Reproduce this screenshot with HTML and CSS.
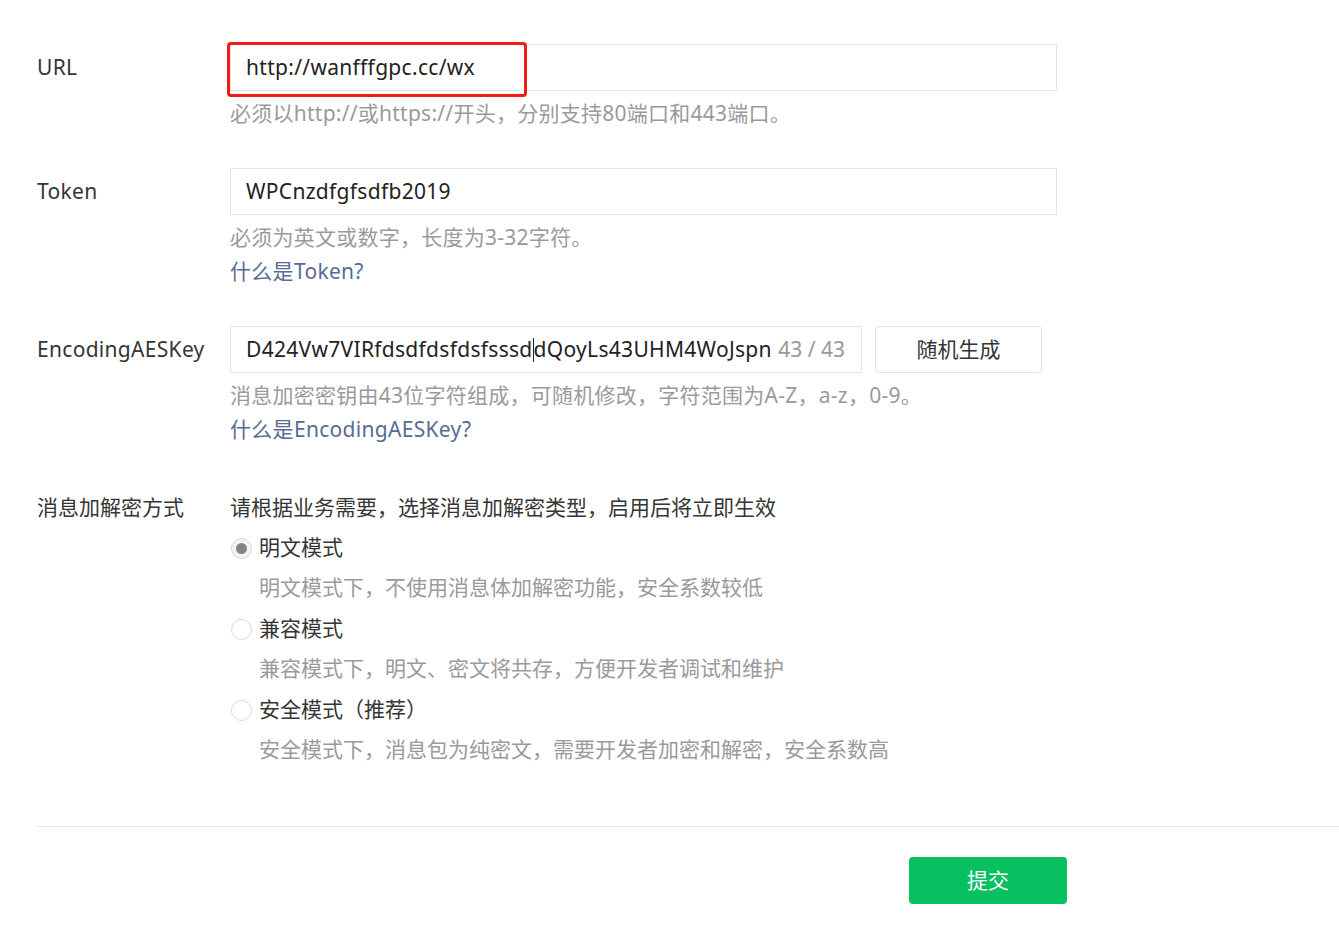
FILE: index.html
```html
<!DOCTYPE html>
<html lang="zh-CN">
<head>
<meta charset="utf-8">
<title>服务器配置</title>
<link rel="stylesheet" href="styles.css">
</head>
<body>
<div class="page">
  <div class="row row-url">
    <div class="label">URL</div>
    <div class="field">
      <div class="input-wrap">
        <div class="input">http://wanfffgpc.cc/wx</div>
        <div class="mark"></div>
      </div>
      <div class="hint">必须以http://或https://开头，分别支持80端口和443端口。</div>
    </div>
  </div>

  <div class="row">
    <div class="label">Token</div>
    <div class="field">
      <div class="input">WPCnzdfgfsdfb2019</div>
      <div class="hint">必须为英文或数字，长度为3-32字符。</div>
      <a class="link" href="#">什么是Token?</a>
    </div>
  </div>

  <div class="row">
    <div class="label">EncodingAESKey</div>
    <div class="field">
      <div class="key-line">
        <div class="input input-key"><span class="key-text">D424Vw7VIRfdsdfdsfdsfsssd<span class="caret"></span>dQoyLs43UHM4WoJspn</span><span class="counter">43 / 43</span></div>
        <button class="btn-gen" type="button">随机生成</button>
      </div>
      <div class="hint">消息加密密钥由43位字符组成，可随机修改，字符范围为A-Z，a-z，0-9。</div>
      <a class="link" href="#">什么是EncodingAESKey?</a>
    </div>
  </div>

  <div class="row row-mode">
    <div class="label label-text">消息加解密方式</div>
    <div class="field">
      <div class="mode-intro">请根据业务需要，选择消息加解密类型，启用后将立即生效</div>
      <div class="option">
        <div class="radio-line"><span class="radio checked"></span><span>明文模式</span></div>
        <div class="option-desc">明文模式下，不使用消息体加解密功能，安全系数较低</div>
      </div>
      <div class="option">
        <div class="radio-line"><span class="radio"></span><span>兼容模式</span></div>
        <div class="option-desc">兼容模式下，明文、密文将共存，方便开发者调试和维护</div>
      </div>
      <div class="option">
        <div class="radio-line"><span class="radio"></span><span>安全模式（推荐）</span></div>
        <div class="option-desc">安全模式下，消息包为纯密文，需要开发者加密和解密，安全系数高</div>
      </div>
    </div>
  </div>

  <div class="footer">
    <button class="btn-submit" type="button">提交</button>
  </div>
</div>
</body>
</html>
```

FILE: styles.css
```css
* {
  box-sizing: border-box;
}

html, body {
  margin: 0;
  padding: 0;
  background: #ffffff;
}

body {
  font-family: "Noto Sans", "Noto Sans CJK SC", sans-serif;
  font-size: 21px;
  color: #353535;
  overflow: hidden;
}

.page {
  padding: 44px 0 0 37px;
}

.row {
  display: grid;
  grid-template-columns: 193px 827px;
  margin-bottom: 38px;
}

.row-mode {
  margin-top: 44px;
  margin-bottom: 0;
}

.label {
  line-height: 47px;
  height: 47px;
  white-space: nowrap;
  color: #353535;
  letter-spacing: 0.3px;
}

.label-text {
  line-height: 34px;
  height: 34px;
  letter-spacing: 0;
}

.field {
  display: flex;
  flex-direction: column;
  align-items: flex-start;
}

.input-wrap {
  position: relative;
  width: 100%;
}

.input {
  width: 100%;
  height: 47px;
  border: 1px solid #e4e4e4;
  padding: 0 15px;
  line-height: 45px;
  color: #222222;
  white-space: nowrap;
  overflow: hidden;
  letter-spacing: 0.3px;
}

.mark {
  position: absolute;
  left: -3px;
  top: -2px;
  width: 300px;
  height: 55px;
  border: 3px solid #f21c16;
  border-radius: 4px;
}

.hint {
  margin-top: 5px;
  line-height: 34px;
  color: #9a9a9a;
  white-space: nowrap;
  letter-spacing: 0.25px;
}

.link {
  line-height: 34px;
  color: #576b95;
  text-decoration: none;
  white-space: nowrap;
  letter-spacing: 0.3px;
}

.key-line {
  display: flex;
  gap: 13px;
  width: 100%;
}

.input-key {
  width: 632px;
  display: flex;
  justify-content: space-between;
  padding-right: 16px;
}

.caret {
  display: inline-block;
  width: 1px;
  height: 24px;
  background: #222222;
  vertical-align: -5px;
}

.counter {
  color: #9a9a9a;
  white-space: nowrap;
  letter-spacing: 0;
}

.btn-gen {
  width: 167px;
  height: 47px;
  border: 1px solid #e0e0e0;
  border-radius: 4px;
  background: #ffffff;
  font-family: inherit;
  font-size: 21px;
  color: #353535;
  padding: 0 0 3px;
  cursor: pointer;
}

.mode-intro {
  line-height: 34px;
  color: #353535;
}

.option {
  margin-top: 2px;
  display: flex;
  flex-direction: column;
}

.option + .option {
  margin-top: 1px;
}

.radio-line {
  display: flex;
  align-items: center;
  height: 40px;
  gap: 7px;
  color: #353535;
}

.radio {
  width: 21px;
  height: 21px;
  border-radius: 50%;
  border: 1px solid #d9d9d9;
  background: #ffffff;
  display: flex;
  align-items: center;
  justify-content: center;
  margin-left: 1px;
  margin-top: 4px;
  flex: none;
}

.radio.checked {
  border-color: #d5d5d5;
  background: #f4f4f4;
}

.radio.checked::after {
  content: "";
  width: 11px;
  height: 11px;
  border-radius: 50%;
  background: #858585;
}

.option-desc {
  margin-top: 2px;
  padding-left: 29px;
  line-height: 38px;
  color: #9a9a9a;
  white-space: nowrap;
}

.footer {
  margin-top: 58px;
  border-top: 1px solid #e5e5e5;
  padding: 30px 0 0 872px;
}

.btn-submit {
  width: 158px;
  height: 47px;
  border: none;
  border-radius: 4px;
  background: #07c160;
  color: #ffffff;
  font-family: inherit;
  font-size: 21px;
  padding: 0 0 3px;
  cursor: pointer;
}
```
